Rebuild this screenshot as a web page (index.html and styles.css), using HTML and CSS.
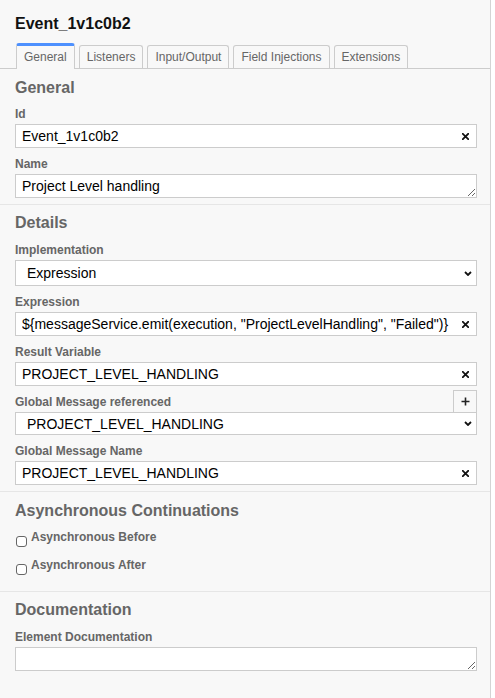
FILE: index.html
```html
<!DOCTYPE html>
<html lang="en">
<head>
<meta charset="utf-8">
<title>Properties panel</title>
<link rel="stylesheet" href="styles.css">
</head>
<body>
<div class="panel">
  <div class="header">
    <div class="title">Event_1v1c0b2</div>
  </div>
  <div class="tabbar">
    <ul class="tabs">
      <li class="tab active">General</li>
      <li class="tab">Listeners</li>
      <li class="tab">Input/Output</li>
      <li class="tab">Field Injections</li>
      <li class="tab">Extensions</li>
    </ul>
  </div>

  <div class="group first">
    <div class="group-label">General</div>
    <div class="entries">
      <div class="entry">
        <label class="label">Id</label>
        <div class="field">
          <input class="text" type="text" value="Event_1v1c0b2">
          <button class="clear" type="button"><svg width="7" height="7" viewBox="0 0 7 7"><path d="M0.8 0.8L6.2 6.2M6.2 0.8L0.8 6.2" stroke="#111" stroke-width="1.8" stroke-linecap="square"/></svg></button>
        </div>
      </div>
      <div class="entry">
        <label class="label">Name</label>
        <textarea class="area" rows="1">Project Level handling</textarea>
      </div>
    </div>
  </div>

  <div class="group">
    <div class="group-label">Details</div>
    <div class="entries">
      <div class="entry">
        <label class="label">Implementation</label>
        <div class="select-wrap tall">
          <select class="select"><option>Expression</option></select>
          <svg class="chev" width="8" height="5" viewBox="0 0 8 5"><path d="M1 1L4 4L7 1" fill="none" stroke="#111" stroke-width="1.8"/></svg>
        </div>
      </div>
      <div class="entry">
        <label class="label">Expression</label>
        <div class="field">
          <input class="text" type="text" value="${messageService.emit(execution, &quot;ProjectLevelHandling&quot;, &quot;Failed&quot;)}">
          <button class="clear" type="button"><svg width="7" height="7" viewBox="0 0 7 7"><path d="M0.8 0.8L6.2 6.2M6.2 0.8L0.8 6.2" stroke="#111" stroke-width="1.8" stroke-linecap="square"/></svg></button>
        </div>
      </div>
      <div class="entry">
        <label class="label">Result Variable</label>
        <div class="field">
          <input class="text" type="text" value="PROJECT_LEVEL_HANDLING">
          <button class="clear" type="button"><svg width="7" height="7" viewBox="0 0 7 7"><path d="M0.8 0.8L6.2 6.2M6.2 0.8L0.8 6.2" stroke="#111" stroke-width="1.8" stroke-linecap="square"/></svg></button>
        </div>
      </div>
      <div class="entry">
        <div class="label-row">
          <label class="label">Global Message referenced</label>
          <button class="add" type="button"><svg width="9" height="9" viewBox="0 0 9 9"><path d="M4.5 0.5V8.5M0.5 4.5H8.5" stroke="#222" stroke-width="1.6"/></svg></button>
        </div>
        <div class="select-wrap short">
          <select class="select"><option>PROJECT_LEVEL_HANDLING</option></select>
          <svg class="chev" width="8" height="5" viewBox="0 0 8 5"><path d="M1 1L4 4L7 1" fill="none" stroke="#111" stroke-width="1.8"/></svg>
        </div>
      </div>
      <div class="entry">
        <label class="label">Global Message Name</label>
        <div class="field">
          <input class="text" type="text" value="PROJECT_LEVEL_HANDLING">
          <button class="clear" type="button"><svg width="7" height="7" viewBox="0 0 7 7"><path d="M0.8 0.8L6.2 6.2M6.2 0.8L0.8 6.2" stroke="#111" stroke-width="1.8" stroke-linecap="square"/></svg></button>
        </div>
      </div>
    </div>
  </div>

  <div class="group async">
    <div class="group-label">Asynchronous Continuations</div>
    <div class="checks">
      <label class="check"><input class="box" type="checkbox"><span>Asynchronous Before</span></label>
      <label class="check"><input class="box" type="checkbox"><span>Asynchronous After</span></label>
    </div>
  </div>

  <div class="group docs">
    <div class="group-label">Documentation</div>
    <div class="entries">
      <div class="entry">
        <label class="label">Element Documentation</label>
        <textarea class="area" rows="1"></textarea>
      </div>
    </div>
  </div>
</div>
</body>
</html>
```

FILE: styles.css
```css
html, body {
  margin: 0;
  padding: 0;
  background: #ffffff;
}

body {
  font-family: "Liberation Sans", Arial, Helvetica, sans-serif;
  color: #000;
}

.panel {
  width: 491px;
  min-height: 698px;
  box-sizing: border-box;
  background: #f8f8f8;
  border-right: 1px solid #d4d4d4;
}

.header {
  padding: 15px 15px 10px;
}

.title {
  font-size: 16px;
  line-height: 18px;
  font-weight: bold;
  color: #111;
}

.tabbar {
  border-bottom: 1px solid #cccccc;
  padding: 0 16px;
}

.tabs {
  list-style: none;
  margin: 0;
  padding: 0;
  display: flex;
  align-items: flex-end;
  gap: 4px;
}

.tab {
  font-size: 12px;
  line-height: 14px;
  color: #666;
  padding: 4px 7px;
  border: 1px solid #cccccc;
  border-bottom: none;
  border-radius: 3px 3px 0 0;
  background: #f8f8f8;
}

.tab.active {
  border-top: 3px solid #4d90fe;
  padding-bottom: 5px;
  margin-bottom: -1px;
}

.group {
  padding: 9px 13px 6px 15px;
  border-top: 1px solid #e6e6e6;
}

.group.first {
  border-top: none;
  padding-top: 10px;
}

.group.first .group-label {
  margin-bottom: 9px;
}

.group.async {
  padding-top: 10px;
  padding-bottom: 16px;
}

.group.docs {
  padding-top: 9px;
}

.group-label {
  font-size: 16px;
  line-height: 18px;
  font-weight: bold;
  color: #666;
  margin-bottom: 10px;
}

.entries {
  display: flex;
  flex-direction: column;
  gap: 8px;
}

.entry {
  display: flex;
  flex-direction: column;
}

.label {
  display: block;
  font-size: 12px;
  line-height: 14px;
  font-weight: bold;
  color: #666;
  padding-top: 1px;
  margin-bottom: 3px;
}

.label-row {
  display: flex;
  justify-content: space-between;
  align-items: flex-end;
}

.add {
  width: 24px;
  height: 23px;
  margin: -5px 0 -1px 0;
  padding: 0;
  border: 1px solid #cccccc;
  background: #f8f8f8;
  display: flex;
  align-items: center;
  justify-content: center;
  position: relative;
  z-index: 1;
}

.field {
  display: flex;
  align-items: center;
  height: 24px;
  box-sizing: border-box;
  border: 1px solid #cccccc;
  background: #ffffff;
}

.text {
  flex: 1;
  min-width: 0;
  border: none;
  outline: none;
  background: transparent;
  padding: 3px 6px;
  font-family: inherit;
  font-size: 14px;
  line-height: 16px;
  color: #000;
}

.clear {
  border: none;
  background: transparent;
  padding: 0 7px 0 4px;
  height: 100%;
  display: flex;
  align-items: center;
}

.area {
  display: block;
  width: 100%;
  height: 24px;
  box-sizing: border-box;
  border: 1px solid #cccccc;
  background: #ffffff;
  padding: 3px 6px;
  font-family: inherit;
  font-size: 14px;
  line-height: 16px;
  color: #000;
  resize: vertical;
  overflow: hidden;
  margin: 0;
}

.select-wrap {
  display: grid;
}

.select-wrap > * {
  grid-area: 1 / 1;
}

.select {
  appearance: none;
  -webkit-appearance: none;
  width: 100%;
  box-sizing: border-box;
  border: 1px solid #cccccc;
  border-radius: 0;
  background: #ffffff;
  padding: 0 24px 0 11px;
  font-family: inherit;
  font-size: 14px;
  color: #000;
  margin: 0;
}

.select-wrap.tall .select {
  height: 26px;
}

.select-wrap.short .select {
  height: 23px;
}

.chev {
  justify-self: end;
  align-self: center;
  margin-right: 5px;
  pointer-events: none;
}

.checks {
  display: flex;
  flex-direction: column;
  gap: 11px;
  margin-top: 4px;
}

.check {
  display: flex;
  align-items: flex-start;
  gap: 4px;
  font-size: 12px;
  line-height: 14px;
  font-weight: bold;
  color: #666;
}

.box {
  appearance: none;
  -webkit-appearance: none;
  width: 11px;
  height: 11px;
  margin: 6px 0 0 1px;
  border: 1px solid #666;
  border-radius: 3px;
  background: #fff;
  box-sizing: border-box;
}
```
